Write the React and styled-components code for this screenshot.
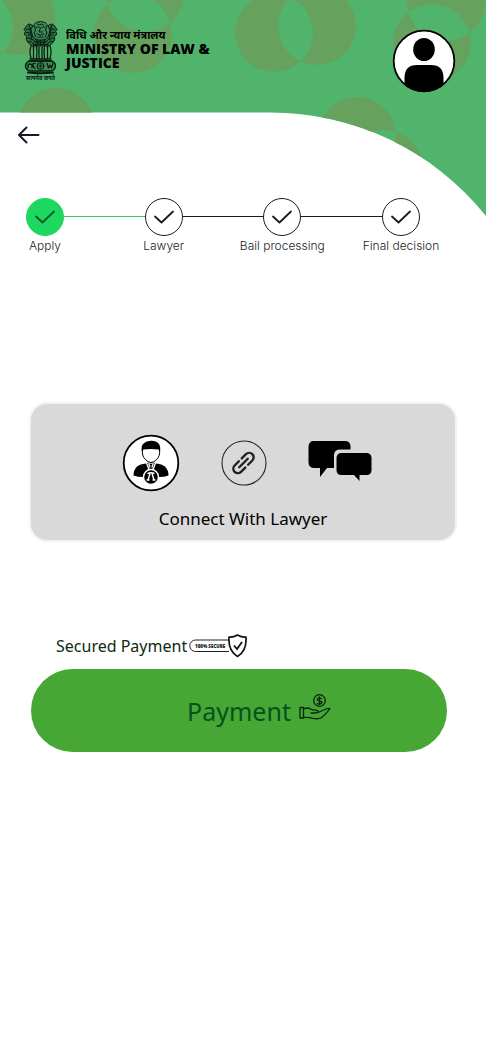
import React from "react";
import styled, { createGlobalStyle } from "styled-components";

const GlobalStyle = createGlobalStyle`
  * { box-sizing: border-box; }
  body {
    margin: 0;
    background: #ffffff;
    color: #000000;
    font-family: "Noto Sans", "Open Sans", sans-serif;
  }
  button { font: inherit; color: inherit; border: 0; padding: 0; background: none; cursor: pointer; }
`;

const Page = styled.div`
  position: relative;
  min-height: 100vh;
  overflow: hidden;
`;

const HeaderArt = styled.svg`
  position: absolute;
  top: 0;
  left: 0;
  width: 100%;
  display: block;
  pointer-events: none;
`;

const Header = styled.header`
  position: relative;
  display: flex;
  justify-content: space-between;
  align-items: flex-start;
  height: 112px;
  padding: 20px 30px 0 22px;
`;

const Brand = styled.div`
  display: flex;
  gap: 8px;
`;

const BrandText = styled.div`
  padding-top: 8px;
`;

const BrandHindi = styled.div`
  font: 700 11px/14px "Noto Sans", "Noto Sans Devanagari", sans-serif;
`;

const BrandName = styled.h1`
  width: 160px;
  margin: 0;
  font: 800 14px/14px "Open Sans", "Noto Sans", sans-serif;
`;

const Avatar = styled.button`
  margin-top: 9px;
  svg { display: block; }
`;

const Nav = styled.nav`
  position: relative;
  padding: 12px 16px 0;
`;

const BackButton = styled.button`
  display: block;
  svg { display: block; }
`;

const Steps = styled.ol`
  position: relative;
  display: flex;
  margin: 52px 66px 0 26px;
  padding: 0;
  list-style: none;
`;

const Step = styled.li`
  display: flex;
  flex: ${(p) => (p.$last ? "none" : "1")};
`;

const StepBody = styled.div`
  display: flex;
  flex-direction: column;
  align-items: center;
  width: 38px;
`;

const StepMark = styled.span`
  display: flex;
  align-items: center;
  justify-content: center;
  flex: none;
  width: 38px;
  height: 38px;
  border: 1px solid ${(p) => (p.$done ? "#1ed75f" : "#1b1b1f")};
  border-radius: 50%;
  background: ${(p) => (p.$done ? "#1ed75f" : "#ffffff")};
  color: ${(p) => (p.$done ? "#0f5a2a" : "#1b1b1f")};
`;

const StepLabel = styled.span`
  margin-top: 2px;
  font: 300 12px/16px Inter, Roboto, sans-serif;
  color: #1b1b1f;
  white-space: nowrap;
`;

const Connector = styled.span`
  flex: 1;
  height: 1px;
  margin-top: 18px;
  background: ${(p) => (p.$done ? "#35c06a" : "#1b1b1f")};
`;

const Card = styled.section`
  display: flex;
  flex-direction: column;
  align-items: center;
  margin: 148px 29px 0;
  padding: 30px 16px 9px;
  border: 2px solid #f3f3f3;
  border-radius: 18px;
  background: #d9d9d9;
`;

const CardIcons = styled.div`
  display: flex;
  align-items: center;
  gap: 41px;
  padding-left: 8px;
  svg { display: block; }
`;

const CardTitle = styled.h2`
  margin: 15px 0 0;
  font-size: 17px;
  line-height: 24px;
  font-weight: 400;
`;

const Secured = styled.p`
  display: flex;
  align-items: center;
  gap: 2px;
  margin: 92px 0 0 56px;
  font-size: 16px;
  line-height: 24px;
  color: #0c2a10;
  white-space: nowrap;
`;

const SecureTag = styled.svg`
  flex: none;
`;

const PayArea = styled.div`
  margin: 11px 39px 40px 31px;
`;

const PayButton = styled.button`
  display: flex;
  align-items: center;
  justify-content: center;
  gap: 8px;
  width: 100%;
  height: 83px;
  padding-left: 40px;
  border-radius: 42px;
  background: #46a735;
  color: #07521a;
  font-size: 25px;
  line-height: 32px;
  svg { margin-bottom: 8px; }
`;

const steps = [
  { label: "Apply", done: true },
  { label: "Lawyer" },
  { label: "Bail processing" },
  { label: "Final decision" },
];

const circle = (x, y, r = 39) =>
  `M${x - r} ${y}a${r} ${r} 0 1 0 ${2 * r} 0a${r} ${r} 0 1 0 ${-2 * r} 0z`;

const pattern = [
  circle(17, 17, 38), circle(-25, 27, 38),
  circle(133, 34), circle(145, -7),
  circle(274, 33), circle(317, 26),
  circle(432, 43), circle(446, 2),
  circle(56, 127), circle(357, 136), circle(384, 169),
].join("");

function Backdrop() {
  return (
    <HeaderArt viewBox="0 0 486 216" aria-hidden="true">
      <defs>
        <clipPath id="swoop">
          <path d="M0 0H486V216A276 276 0 0 0 270 112.500H0z" />
        </clipPath>
      </defs>
      <g clipPath="url(#swoop)">
        <path d="M0 0H486V216H0z" fill="#50b46c" />
        <path d={pattern} fill="#66a25e" fillRule="evenodd" />
      </g>
    </HeaderArt>
  );
}

function Emblem() {
  return (
    <svg width="36" height="62" viewBox="0 0 36 62" role="img" aria-label="State Emblem of India">
      <g fill="none" stroke="#0a1c10" strokeWidth="1" strokeLinecap="round" strokeLinejoin="round">
        <path d="M11 6Q7 2 4.500 6L2 9.500l1.500 2L2 14l2.500 2.500Q3.500 20 6 22.500L10 26h17l4-3.500q2.500-2.500 1.500-6L35 14l-1.500-2.500 1.500-2L32.500 6Q30 2 26 6z" fill="#2b7044" />
        <path d="M4.500 9.500l3-.5m-3 3.500l3.500.5M7 5.500q1 4 3 5.500m-4 4q3-1 5 1.500M5.500 18q3-1 6 2m-5 1.500q3-.5 5 2M8.500 8q-1 3 .5 6t0 6M32.500 9.500l-3-.5m3 3.500l-3.500.5M30 5.500q-1 4-3 5.500m4 4q-3-1-5 1.500m5.500 1.500q-3-1-6 2m5 1.500q-3-.5-5 2M28.500 8q1 3-.5 6t0 6" />
        <path d="M11.500 5q2-3.500 7-3.500T25.500 5l2.500 5-1.500 6-3.500 4h-9l-3.500-4L9 10z" fill="#3c8a57" />
        <path d="M14 7.500q2-2 3.500 0m2 0q2-2 3.500 0M18.500 8l-1.500 4h3.500M15 14q3.500 2.500 7 0M12.500 6l1 4-1.500 3 2 4m10.500-11l-1 4 1.500 3-2 4M15.500 4l2 1 2-1 2 1M16 17h5" />
        <path d="M12 21q3 3 6 0 3 3 7 0M11 24q4 2 7-.5 3 2.500 8 .5M15 19v6m7-6v6m-3.500-5v5" strokeWidth="1.200" />
        <path d="M9 26q-2 5 0 12m2.500-12v13m3-13q1 6 0 13m2.500-12v12m3-12v12m2.500-13q-1 6 0 13m3-13v13m2.500-13q2 5 0 12" strokeWidth="1.300" />
        <rect x="3.500" y="41" width="30" height="10" rx="5" fill="#3b8f55" strokeWidth="1.400" />
        <path d="M8 39h21M7 41h23" strokeWidth="1.400" />
        <circle cx="18.500" cy="46" r="3.500" />
        <path d="M15 46h7M18.500 42.500v7M16 43.500l5 5m0-5l-5 5" strokeWidth=".6" />
        <path d="M6 48v-3q2-2 4 0v3m3-4.500q-3-.5-2 2t2 3M25 43.500l1.500 4.500 1.500-3 1.500 3 1.500-4.500" strokeWidth="1.300" />
        <path d="M6 52.500q12 1.500 25 0" strokeWidth="1.800" />
      </g>
      <text x="18.500" y="59.500" textAnchor="middle" fontSize="5.500" fontWeight="700" fontFamily="Noto Sans, Noto Sans Devanagari, sans-serif" fill="#0b1f12">सत्यमेव जयते</text>
    </svg>
  );
}

function Person() {
  return (
    <svg width="64" height="64" viewBox="0 0 64 64" aria-hidden="true">
      <defs><clipPath id="face"><circle cx="32" cy="32" r="31" /></clipPath></defs>
      <circle cx="32" cy="32" r="30.500" fill="#fff" />
      <g clipPath="url(#face)">
        <ellipse cx="32" cy="20.500" rx="10.800" ry="11.500" />
        <path d="M12.500 64V49Q12.500 36 25 36H39Q51.500 36 51.500 49V64z" />
      </g>
      <circle cx="32" cy="32" r="30.300" fill="none" stroke="#000" strokeWidth="1.800" />
    </svg>
  );
}

function LawyerIcon() {
  return (
    <svg width="58" height="58" viewBox="0 0 58 58" role="img" aria-label="Lawyer">
      <circle cx="29" cy="29" r="27.300" fill="#fff" stroke="#000" strokeWidth="1.800" />
      <path d="M24 29.500q-6 .5-9 3-3.500 3.500-3.500 9 4 1.500 10 1.500l6-4zM34 29.500q6 .5 9 3 3.500 3.500 3.500 9-4 1.500-10 1.500l-6-4z" />
      <path d="M25.500 29l3.500 9 3.500-9z" fill="#fff" stroke="#000" strokeWidth=".6" />
      <path d="M27.500 30h3l-1 2 1 6h-3l1-6z" />
      <path d="M20.500 15q-1 7 3 10.500 2.500 3 5.500 3t5.500-3q4-3.500 3-10.500" fill="#fff" stroke="#000" strokeWidth="1" />
      <path d="M20.300 18.500q-2-6 1.200-9 3-3 8-2.800 5.500.3 7.500 3.300 2 3 .8 8.500l-1.300-3q-8-1-15.200 0z" />
      <circle cx="29" cy="43" r="7.500" fill="#000" stroke="#fff" strokeWidth="1.400" />
      <path d="M25.500 39.500q3.500-1.500 7 0M28 39.500l-2 6.500m4-6.500l2 6.500M24.500 46h3m3 0h3" fill="none" stroke="#fff" strokeWidth="1.400" />
    </svg>
  );
}

function LinkIcon() {
  return (
    <svg width="46" height="46" viewBox="0 0 46 46" role="img" aria-label="Link">
      <circle cx="23" cy="23" r="22" fill="none" stroke="#222226" strokeWidth="1.100" />
      <g transform="translate(22.500 23) rotate(-45)" fill="none" stroke="#222226" strokeWidth="2.400" strokeLinecap="round">
        <path d="M-2-4.500H-8A4.500 4.500 0 0 0-8 4.500H-2M2-4.500H8A4.500 4.500 0 0 1 8 4.500H2M-6 0H6" />
      </g>
    </svg>
  );
}

function ChatIcon() {
  return (
    <svg width="64" height="46" viewBox="0 0 64 46" role="img" aria-label="Chat">
      <path d="M5.500 1H37Q42 1 42.500 6V9.500H31.500Q26 10 26 15.500V28H19L12 37V28H6.500Q.5 28 .5 22V6.500Q1 1 5.500 1z" />
      <path d="M33.500 13H58.500Q63 13 63.500 17.500V30.500Q63 35 58.500 35H51.500V41L46 35H33.500Q29 35 28.500 30.500V17.500Q29 13 33.500 13z" />
    </svg>
  );
}

function SecureBadge() {
  return (
    <SecureTag width="58" height="24" viewBox="0 0 58 24" role="img" aria-label="100% secure">
      <path d="M40 6H6.500A5.700 5.700 0 0 0 6.500 17.500H40" fill="none" stroke="#222" strokeWidth="1" />
      <text x="6" y="13.500" fontSize="4.500" fontWeight="800" fontFamily="Open Sans, Noto Sans, sans-serif" fill="#111">100% SECURE</text>
      <path d="M48.500 1Q53 3.500 57 3 58 17 48.500 22.500 39 17 40 3 44 3.500 48.500 1z" fill="#fff" stroke="#111" strokeWidth="1.700" strokeLinejoin="round" />
      <path d="M45 11.500l3 3.500 5-7" fill="none" stroke="#111" strokeWidth="1.800" />
    </SecureTag>
  );
}

function PayHand() {
  return (
    <svg width="32" height="26" viewBox="0 0 32 26" aria-hidden="true">
      <g fill="none" stroke="#0b2410" strokeWidth="1.300" strokeLinejoin="round" strokeLinecap="round">
        <circle cx="20.500" cy="6.500" r="5.800" />
        <path d="M22.500 4.500q-2-1.200-3.500 0t0 2 3.200 1-.2 2-3.500 0M20.500 3v7" />
        <path d="M1 13.500h3.500v10.500H1zM4.500 15q4-2 7 0 2 1.200 5 1.200 3 0 2.500 1.800-.4 1-2.500 1H12M19 18.500l8-3.500q2.500-1 4-.5-3.500 5.500-9 9.500-3 1.300-8 .3-5-1.300-9.500-.8" />
      </g>
    </svg>
  );
}

export default function App() {
  return (
    <Page>
      <GlobalStyle />
      <Backdrop />
      <Header>
        <Brand>
          <Emblem />
          <BrandText>
            <BrandHindi lang="hi">विधि और न्याय मंत्रालय</BrandHindi>
            <BrandName>MINISTRY OF LAW &amp; JUSTICE</BrandName>
          </BrandText>
        </Brand>
        <Avatar aria-label="Profile"><Person /></Avatar>
      </Header>
      <Nav>
        <BackButton aria-label="Back">
          <svg width="24" height="22" viewBox="0 0 24 22" fill="none" stroke="#1b1b27" strokeWidth="2" strokeLinecap="round" strokeLinejoin="round">
            <path d="M22.500 11H3M10.500 3.500L3 11l7.500 7.500" />
          </svg>
        </BackButton>
      </Nav>
      <main>
        <Steps>
          {steps.map((s, i) => (
            <Step key={s.label} $last={i === steps.length - 1}>
              <StepBody>
                <StepMark $done={s.done}>
                  <svg width="20" height="14" viewBox="0 0 20 14" fill="none" stroke="currentColor" strokeWidth="1.800" strokeLinecap="round" strokeLinejoin="round">
                    <path d="M1 6.500l6.500 6L19 1.500" />
                  </svg>
                </StepMark>
                <StepLabel>{s.label}</StepLabel>
              </StepBody>
              {i < steps.length - 1 && <Connector $done={s.done} />}
            </Step>
          ))}
        </Steps>
        <Card>
          <CardIcons>
            <LawyerIcon />
            <LinkIcon />
            <ChatIcon />
          </CardIcons>
          <CardTitle>Connect With Lawyer</CardTitle>
        </Card>
        <Secured>Secured Payment<SecureBadge /></Secured>
        <PayArea>
          <PayButton>Payment<PayHand /></PayButton>
        </PayArea>
      </main>
    </Page>
  );
}
